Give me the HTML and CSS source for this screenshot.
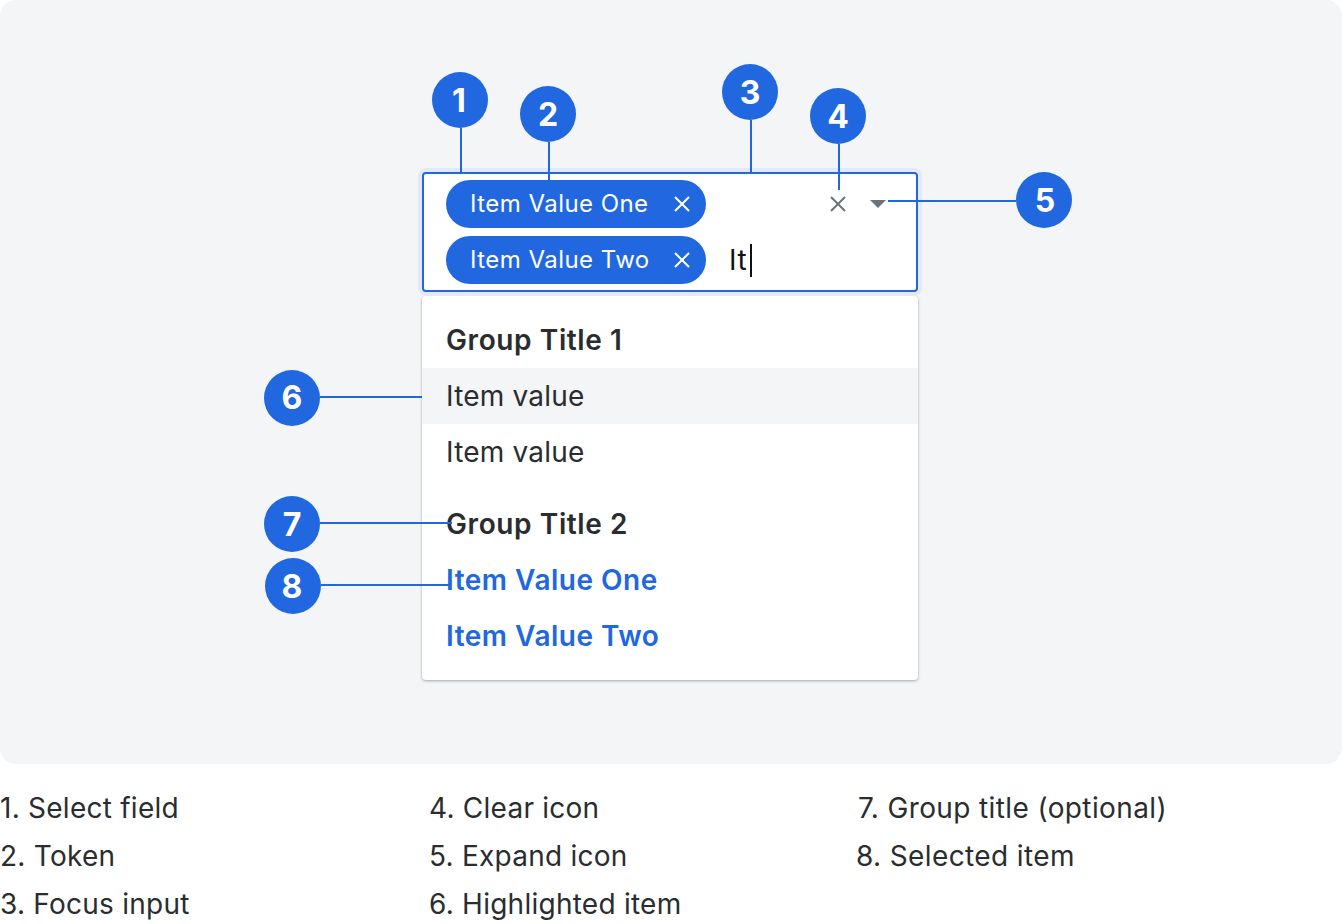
FILE: index.html
```html
<!DOCTYPE html>
<html lang="en">
<head>
<meta charset="utf-8">
<title>Multi select anatomy</title>
<link rel="stylesheet" href="styles.css">
</head>
<body>
<main class="panel">
  <div class="select">
    <div class="row">
      <span class="token"><span class="token-label">Item Value One</span>
        <svg class="x" viewBox="0 0 16 16"><path d="M1 1l14 14M15 1L1 15"/></svg></span>
      <span class="spacer"></span>
      <svg class="clear" viewBox="0 0 16 16"><path d="M1 1l14 14M15 1L1 15"/></svg>
      <svg class="caret" viewBox="0 0 16 8"><path d="M0 0h16L8 8z"/></svg>
    </div>
    <div class="row">
      <span class="token"><span class="token-label">Item Value Two</span>
        <svg class="x" viewBox="0 0 16 16"><path d="M1 1l14 14M15 1L1 15"/></svg></span>
      <span class="typed">It</span><span class="cursor"></span>
    </div>
  </div>
  <div class="menu">
    <div class="item title">Group Title 1</div>
    <div class="item hover">Item value</div>
    <div class="item">Item value</div>
    <div class="item title gap">Group Title 2</div>
    <div class="item selected">Item Value One</div>
    <div class="item selected">Item Value Two</div>
  </div>

  <span class="vline v1"></span><span class="badge b1">1</span>
  <span class="vline v2"></span><span class="badge b2">2</span>
  <span class="vline v3"></span><span class="badge b3">3</span>
  <span class="vline v4"></span><span class="badge b4">4</span>
  <span class="hline h5"></span><span class="badge b5">5</span>
  <span class="hline h6"></span><span class="badge b6">6</span>
  <span class="hline h7"></span><span class="badge b7">7</span>
  <span class="hline h8"></span><span class="badge b8">8</span>
</main>
<section class="legend">
  <div>1. Select field</div>
  <div>4. Clear icon</div>
  <div class="third shift">7. Group title (optional)</div>
  <div>2. Token</div>
  <div>5. Expand icon</div>
  <div class="third">8. Selected item</div>
  <div>3. Focus input</div>
  <div>6. Highlighted item</div>
</section>
</body>
</html>
```
FILE: styles.css
```css
* { box-sizing: border-box; }
html, body { margin: 0; background: #fff; }
body { font-family: Inter, "Liberation Sans", sans-serif; color: #2a2d30; overflow: hidden; }

.panel {
  position: relative;
  height: 764px;
  padding: 172px 424px 0 422px;
  background: #f4f5f7;
  border-radius: 16px;
}

.select {
  position: relative;
  z-index: 1;
  display: flex;
  flex-direction: column;
  gap: 8px;
  height: 120px;
  padding: 6px 0 0 22px;
  background: #fff;
  border: 2px solid #2167e0;
  border-radius: 4px;
  box-shadow: 0 0 0 4px #e2e9f9;
}
.row { display: flex; align-items: center; height: 48px; }
.spacer { flex: 1; }

.token {
  display: flex;
  align-items: center;
  justify-content: space-between;
  width: 260px;
  height: 48px;
  padding: 0 16px 0 24px;
  color: #fff;
  background: #2167e0;
  border-radius: 24px;
  font-size: 24px;
  letter-spacing: 0.45px;
}
.token-label { margin-top: -2px; }
.x { width: 16px; height: 16px; fill: none; stroke: #fff; stroke-width: 2; }
.clear { width: 16px; height: 16px; fill: none; stroke: #6b7579; stroke-width: 2; }
.caret { width: 16px; height: 8px; margin: 0 30px 0 24px; fill: #6b7579; }
.typed { margin-left: 23px; font-size: 28px; color: #111; letter-spacing: 0.6px; }
.cursor { width: 2px; height: 33px; margin-left: 3px; background: #111; }

.menu {
  margin-top: 4px;
  height: 384px;
  padding: 16px 0;
  background: #fff;
  border-radius: 4px;
  box-shadow: 0 1px 3px rgba(0, 0, 0, .32);
}
.item {
  display: flex;
  align-items: center;
  height: 56px;
  padding-left: 24px;
  font-size: 28px;
  letter-spacing: 0.2px;
}
.item.title { font-weight: 600; letter-spacing: 0.6px; }
.item.gap { margin-top: 16px; }
.item.hover { background: #f4f5f7; }
.item.selected { font-weight: 600; color: #2167e0; letter-spacing: 0.5px; }

.badge {
  position: absolute;
  z-index: 3;
  display: flex;
  align-items: center;
  justify-content: center;
  width: 56px;
  height: 56px;
  color: #fff;
  background: #2167e0;
  border-radius: 50%;
  font-size: 32px;
  font-weight: 700;
}
.vline, .hline { position: absolute; z-index: 2; background: #2167e0; }
.vline { width: 2px; }
.hline { height: 2px; }

.b1 { left: 432px; top: 72px; padding-right: 2px; }
.v1 { left: 460px; top: 128px; height: 46px; }
.b2 { left: 520px; top: 86px; }
.v2 { left: 548px; top: 142px; height: 38px; }
.b3 { left: 722px; top: 64px; }
.v3 { left: 750px; top: 120px; height: 54px; }
.b4 { left: 810px; top: 88px; }
.v4 { left: 838px; top: 144px; height: 46px; }
.b5 { left: 1016px; top: 172px; padding-left: 2px; }
.h5 { left: 888px; top: 200px; width: 128px; }
.b6 { left: 264px; top: 370px; padding-bottom: 2px; }
.h6 { left: 320px; top: 396px; width: 102px; }
.b7 { left: 264px; top: 496px; }
.h7 { left: 320px; top: 522px; width: 132px; }
.b8 { left: 265px; top: 558px; padding-right: 2px; }
.h8 { left: 321px; top: 584px; width: 129px; }

.legend {
  display: grid;
  grid-template-columns: 429px 427px 1fr;
  grid-auto-rows: 48px;
  margin-top: 20px;
  font-size: 28px;
  letter-spacing: 0.25px;
  line-height: 48px;
}
.legend div { white-space: nowrap; }
.legend .third { letter-spacing: 0.38px; }
.legend .shift { margin-left: 2px; }
```
